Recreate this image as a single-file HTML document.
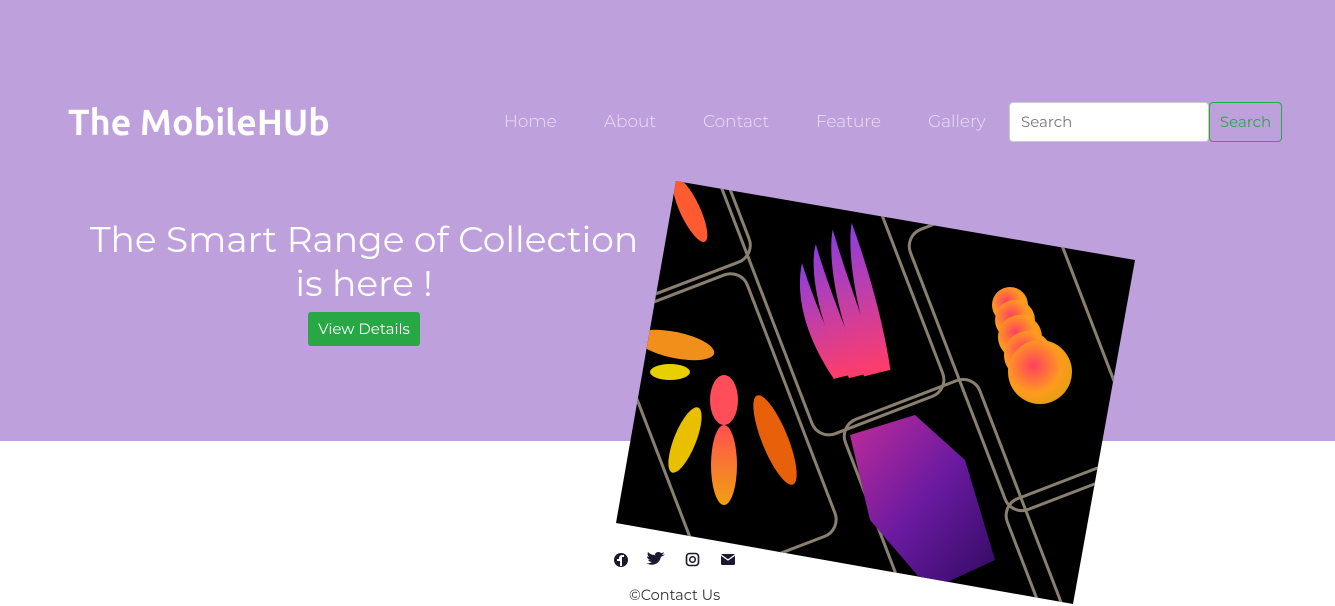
<!DOCTYPE html>
<html><head><meta charset="utf-8"><style>
*{margin:0;padding:0;box-sizing:border-box}
html,body{width:1335px;height:606px;overflow:hidden}
body{background:#fff;font-family:"Montserrat","Liberation Sans",sans-serif;position:relative}
.hero{position:absolute;left:0;top:0;width:1335px;height:441px;background:#bea0dc}
.logo{position:absolute;left:68px;top:101px;color:#fff;font-size:36px;font-weight:bold;font-family:"Ubuntu","Liberation Sans",sans-serif}
.nav{position:absolute;top:112px;color:#ece0f7;font-size:17px;font-weight:300}
.sin{position:absolute;left:1009px;top:102px;width:200px;height:40px;background:#fff;border:1px solid #ccc;border-radius:4px;color:#777;font-size:15px;padding:9px 11px}
.sbtn{position:absolute;left:1209px;top:102px;width:73px;height:40px;border:1px solid #28a745;border-radius:4px;color:#28a745;font-size:15px;padding:9px 0;text-align:center}
h1{position:absolute;left:70px;top:218px;width:588px;text-align:center;color:#fff;font-weight:normal;font-size:36px;line-height:44px}
.vd{position:absolute;left:308px;top:312px;width:112px;height:34px;background:#28a745;color:#fff;border-radius:3px;font-size:15px;text-align:center;line-height:33px}
.ft{position:absolute;left:629px;top:586px;color:#333;font-size:14.5px;line-height:18px}
</style></head><body>
<div class="hero"></div>
<div class="logo">The MobileHUb</div>
<div class="nav" style="left:504px">Home</div>
<div class="nav" style="left:604px">About</div>
<div class="nav" style="left:703px">Contact</div>
<div class="nav" style="left:816px">Feature</div>
<div class="nav" style="left:928px">Gallery</div>
<div class="sin">Search</div>
<div class="sbtn">Search</div>
<h1>The Smart Range of Collection<br>is here !</h1>
<div class="vd">View Details</div>
<svg width="1335" height="606" style="position:absolute;left:0;top:0">
<defs>
<clipPath id="c"><polygon points="676,181 1135,260 1073,604 616,523"/></clipPath>
<linearGradient id="g1" x1="0" y1="0" x2="0" y2="1"><stop offset="0" stop-color="#8a3ee0"/><stop offset="1" stop-color="#ff3d6a"/></linearGradient>
<radialGradient id="g2" cx=".4" cy=".4" r=".7"><stop offset="0" stop-color="#ff4060"/><stop offset=".6" stop-color="#ff9a1f"/><stop offset="1" stop-color="#e0a010"/></radialGradient>
<linearGradient id="g3" x1="0" y1="0" x2="0" y2="1"><stop offset="0" stop-color="#ff5050"/><stop offset="1" stop-color="#f0a010"/></linearGradient>
<linearGradient id="g4" x1="0" y1="0" x2="1" y2="1"><stop offset="0" stop-color="#c02c9a"/><stop offset=".5" stop-color="#6a1aa0"/><stop offset="1" stop-color="#300a60"/></linearGradient>
</defs>
<g clip-path="url(#c)">
<rect x="600" y="170" width="560" height="440" fill="#000"/>
<g fill="none" stroke="#8a8070" stroke-width="3">
<rect x="-72" y="-140" width="144" height="280" rx="18" transform="translate(724,425) rotate(-21)"/>
<rect x="-70" y="-150" width="140" height="300" rx="18" transform="translate(830,275) rotate(-21)"/>
<rect x="-72" y="-150" width="144" height="300" rx="18" transform="translate(1025,350) rotate(-21)"/>
<rect x="-72" y="-150" width="144" height="300" rx="18" transform="translate(960,540) rotate(-21)"/>
<rect x="-70" y="-140" width="140" height="280" rx="18" transform="translate(640,150) rotate(-21)"/>
<rect x="-70" y="-150" width="140" height="300" rx="18" transform="translate(1120,620) rotate(-21)"/>
</g>
<g transform="translate(840,300) rotate(-14)">
<path d="M-25,75 C-45,20 -40,-20 -28,-45 C-25,0 -18,40 -10,75Z" fill="url(#g1)"/>
<path d="M-10,78 C-28,20 -22,-40 -10,-60 C-8,-10 0,40 5,78Z" fill="url(#g1)"/>
<path d="M5,80 C-8,20 -2,-45 10,-70 C12,-15 20,40 20,80Z" fill="url(#g1)"/>
<path d="M20,80 C12,20 18,-45 30,-72 C36,-15 36,40 32,80Z" fill="url(#g1)"/>
</g>
<g>
<circle cx="1010" cy="305" r="18" fill="url(#g2)"/><circle cx="1015" cy="320" r="20" fill="url(#g2)"/>
<circle cx="1020" cy="337" r="22" fill="url(#g2)"/><circle cx="1028" cy="355" r="24" fill="url(#g2)"/>
<circle cx="1040" cy="372" r="32" fill="url(#g2)"/>
</g>
<g>
<ellipse cx="724" cy="400" rx="14" ry="25" fill="#ff4d5a"/>
<ellipse cx="724" cy="465" rx="13" ry="40" fill="url(#g3)"/>
<ellipse cx="775" cy="440" rx="13" ry="48" fill="#e8600a" transform="rotate(-22 775 440)"/>
<ellipse cx="685" cy="440" rx="11" ry="35" fill="#e8c000" transform="rotate(22 685 440)"/>
<ellipse cx="675" cy="345" rx="40" ry="13" fill="#f0901a" transform="rotate(12 675 345)"/>
<ellipse cx="670" cy="372" rx="20" ry="8" fill="#e8d000"/>
</g>
<polygon points="850,435 915,415 965,460 995,560 930,590 870,520" fill="url(#g4)"/>
<ellipse cx="690" cy="210" rx="10" ry="35" fill="#ff5a30" transform="rotate(-25 690 210)"/>
</g>
<g fill="#1a1a2e">
<circle cx="621" cy="560" r="7"/>
<path d="M650,556 c2,1 4,1 5,-1 c1,2 3,2 3,2 c3,0 6,-1 7,-3 c-1,1 -2,1 -3,1 c1,-1 2,-2 2,-3 c-1,1 -2,1 -3,1 c-2,-2 -6,-1 -6,2 c-3,0 -5,-1 -7,-3 c-1,2 0,4 1,5 c-1,0 -1,0 -2,-1 c0,2 1,3 3,4 c-1,0 -1,0 -2,0 c1,1 2,2 4,2 c-2,1 -4,2 -6,1 c6,4 15,1 15,-8" transform="translate(0,0)"/>
<rect x="686.5" y="553.5" width="12" height="12" rx="3" fill="none" stroke="#1a1a2e" stroke-width="1.6"/>
<circle cx="692.5" cy="559.5" r="2.8" fill="none" stroke="#1a1a2e" stroke-width="1.5"/>
<rect x="721" y="554" width="14" height="11" rx="1.5"/>
</g>
<path d="M617,560 h3 v-2 c0,-1 1,-2 2,-2 h2" stroke="#fff" stroke-width="2" fill="none"/><path d="M621,557 v9" stroke="#fff" stroke-width="2"/>
<path d="M721,555 l7,5 l7,-5" stroke="#fff" stroke-width="1.3" fill="none"/>
</svg>
<div class="ft">©Contact Us</div>
</body></html>
